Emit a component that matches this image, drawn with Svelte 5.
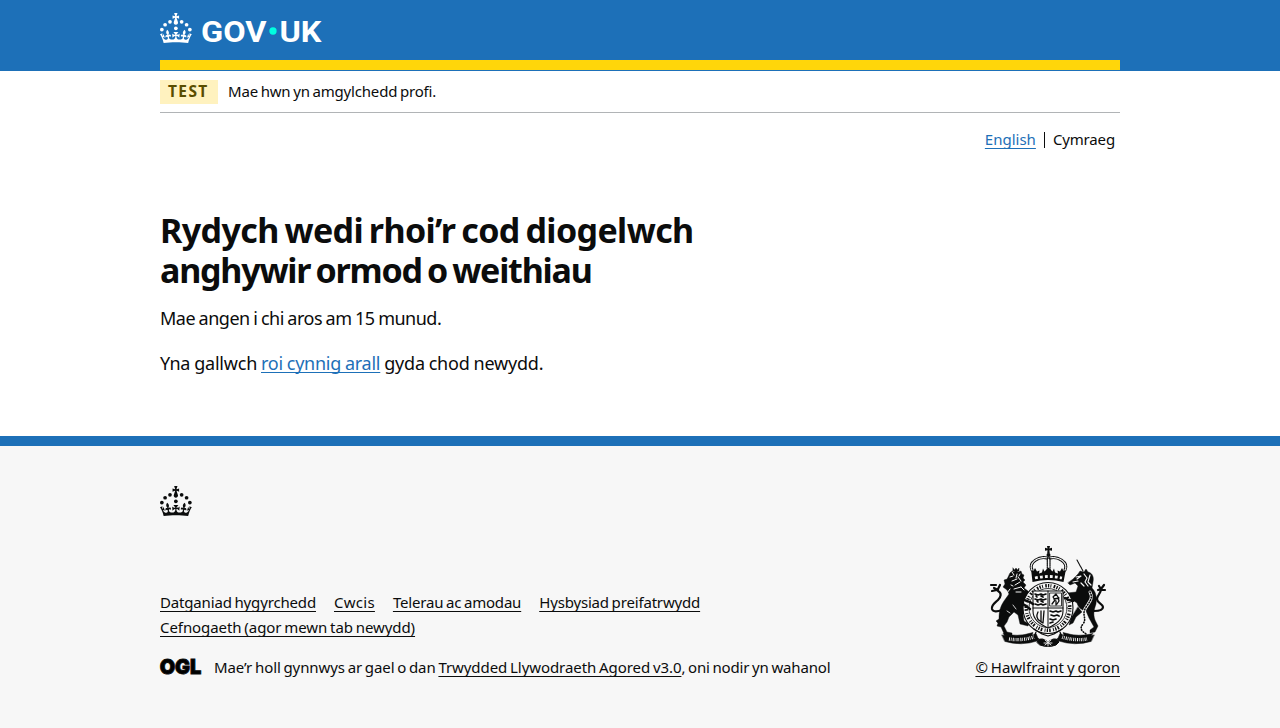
<script>
  const crown = 'M33.1,9.8c.2-.1.3-.3.5-.5l4.6,2.4v-6.8l-4.6,1.5c-.1-.2-.3-.3-.5-.5l1.9-5.9h-6.7l1.9,5.9c-.2.1-.3.3-.5.5l-4.6-1.5v6.8l4.6-2.4c.1.2.3.3.5.5l-2.6,8c-.9,2.8,1.2,5.7,4.1,5.7h0c3,0,5.1-2.9,4.1-5.7l-2.6-8ZM37,37.9s-3.4,3.8-4.1,6.1c2.2,0,4.2-.5,6.4-2.8l-.7,8.5c-2-2.8-4.4-4.1-5.7-3.8.1,3.1.5,6.7,5.8,7.2,3.7.3,6.7-1.5,7-3.8.4-2.6-2-4.3-3.7-1.6-1.4-4.5,2.4-6.1,4.9-3.2-1.9-4.5-1.8-7.7,2.4-10.9,3,4,2.6,7.3-1.2,11.1,2.4-1.3,6.2,0,4,4.6-1.2-2.8-3.7-2.2-4.2.2-.3,1.7.7,3.7,3,4.2,1.9.3,4.7-.9,7-5.9-1.3,0-2.4.7-3.9,1.7l2.4-8c.6,2.3,1.4,3.7,2.2,4.5.6-1.6.5-2.8,0-5.3l5,1.8c-2.6,3.6-5.2,8.7-7.3,17.5-7.4-1.1-15.7-1.7-24.5-1.7h0c-8.8,0-17.1.6-24.5,1.7-2.1-8.9-4.7-13.9-7.3-17.5l5-1.8c-.5,2.5-.6,3.7,0,5.3.8-.8,1.6-2.3,2.2-4.5l2.4,8c-1.5-1-2.6-1.7-3.9-1.7,2.3,5,5.2,6.2,7,5.9,2.3-.4,3.3-2.4,3-4.2-.5-2.4-3-3.1-4.2-.2-2.2-4.6,1.6-6,4-4.6-3.7-3.7-4.2-7.1-1.2-11.1,4.2,3.2,4.3,6.4,2.4,10.9,2.5-2.8,6.3-1.3,4.9,3.2-1.8-2.7-4.1-1-3.7,1.6.3,2.3,3.3,4.1,7,3.8,5.4-.5,5.7-4.2,5.8-7.2-1.3-.2-3.7,1-5.7,3.8l-.7-8.5c2.2,2.3,4.2,2.7,6.4,2.8-.7-2.3-4.1-6.1-4.1-6.1h10.6,0Z';
  const jewels = [[20, 17.6], [10.2, 23.5], [3.7, 33.2], [31.7, 30.6], [43.3, 17.6], [53.2, 23.5], [59.7, 33.2]];
</script>

{#snippet crownMark()}
  {#each jewels as [x, y]}<circle cx={x} cy={y} r="3.7" />{/each}
  <path d={crown} />
{/snippet}

<header>
  <div class="wrap head">
    <svg class="logo" viewBox="0 0 324 60" width="162" height="30" fill="#fff">
      {@render crownMark()}
      <text x="82" y="57.500" font-size="60" textLength="131" lengthAdjust="spacingAndGlyphs">GOV</text>
      <circle cx="226" cy="36" r="7.3" fill="#00ffe0" />
      <text x="239" y="57.500" font-size="60" textLength="84" lengthAdjust="spacingAndGlyphs">UK</text>
    </svg>
    <div class="bar"></div>
  </div>
</header>

<div class="wrap">
  <div class="phase"><strong>TEST</strong><span>Mae hwn yn amgylchedd profi.</span></div>
  <nav><a href="#en">English</a><span class="cy"><span>Cymraeg</span></span></nav>
  <main>
    <h1><span class="one">Rydych wedi rhoi’r cod diogelwch</span> <span class="two">anghywir ormod o weithiau</span></h1>
    <p class="wait">Mae angen i chi aros am 15 munud.</p>
    <p>Yna gallwch <a href="#try">roi cynnig arall</a> gyda chod newydd.</p>
  </main>
</div>

<footer>
  <div class="wrap">
    <svg class="crown" viewBox="0 0 64 60" width="32" height="30" fill="#0b0c0c">{@render crownMark()}</svg>
    <div class="meta">
      <div>
        <ul>
          <li><a class="l1" href="#accessibility">Datganiad hygyrchedd</a></li>
          <li><a class="l2" href="#cookies">Cwcis</a></li>
          <li><a class="l3" href="#terms">Telerau ac amodau</a></li>
          <li><a class="l4" href="#privacy">Hysbysiad preifatrwydd</a></li>
          <li><a class="l5" href="#support">Cefnogaeth (agor mewn tab newydd)</a></li>
        </ul>
        <div class="licence">
          <svg class="ogl" viewBox="0 0 41 17" width="41" height="17">
            <text x="-.3" y="16" textLength="41.5" lengthAdjust="spacingAndGlyphs">OGL</text>
          </svg>
          <span>Mae’r holl gynnwys ar gael o dan <a href="#ogl">Trwydded Llywodraeth Agored v3.0</a><span class="end">, oni nodir yn wahanol</span></span>
        </div>
      </div>
      <div class="copy">
        <svg class="crest" viewBox="0 0 125 102" width="125" height="102" fill="#0b0c0c" stroke="#0b0c0c" stroke-linecap="round" stroke-linejoin="round">
          <!-- lion -->
          <g stroke-width=".4">
            <path d="M25 27l2-2 2 1 2-3 2 3 3-1 1 3 2 1-1 3 2 2-2 2 3 3-2 3 4 3 3 6 7 2-1 3-5-1 4 5-4 1-6-6-2 4c3 3 3 7-1 9l1 7 5 3-1 2-8-2-2-9-4-3-5 5-2 5-3 4 3 6 5 1v3h-7l-4-9-4-1 1-3-2-2 3-2c0-7 1-12 5-18l5-7-2-4-4-3 2-3-1-4 3-1Z" />
            <path d="M28 22l1.500 2 1.500-2 1.500 2 1.500-2v3h-6Z" />
          </g>
          <path d="M17 64c-5 2-9 2-10-1-1-4 3-6 6-9s4-7 0-9M9 42l4 2M6 39l5 0M7 45l5-1M15 39l-2 4" fill="none" stroke-width="2.200" />
          <path d="M26 65l-9 6-3 5" fill="none" stroke-width="3" />
          <path d="M25 31l3-1M32 28l-1 4M27 35l5-2M30 39l5-3M33 31l3 4M29 43l7-2M27 26l2 3M36 41l3 3M26 39l2 1M35 28l-1 2M31 46l5 0M25 43l-3 4" stroke="#f7f7f7" stroke-width="1" fill="none" />
          <path d="M28 59l3 4M22 65l3 2" stroke="#f7f7f7" stroke-width=".8" />
          <!-- unicorn -->
          <path d="M92 14l6 11" fill="none" stroke-width="1.100" stroke-dasharray="2 .5" />
          <g stroke-width=".4">
            <path d="M88 33l5-5 2-3 4 1 2-3 2 3c5 1 6 6 5 10l-1 6c4 4 5 9 4 16-2 6-3 10-1 16l3 6-3 6-5 1v-3l4-3-5-9-3-7c-5-1-8-4-9-8l-9-6-7-2-1-3 7 1 9-1 2-6-3-3-5 2-2-2Z" />
            <path d="M93 61l4 5-6 5-3 6-4 2 2-7Z" />
          </g>
          <path d="M109 65c5 0 9-1 9-4s-6-4-6-8 4-5 4-10M114 40l2 3M119 39l-3 4M113 44l3-1M120 44l-3 0" fill="none" stroke-width="2.200" />
          <path d="M91 31l5-1-4 3M99 28l3 4-2 4 3 4M105 29l-2 7 3 3M96 37l3 3M93 35l-5 1" stroke="#f7f7f7" stroke-width="1.200" fill="none" />
          <path d="M105 46c4 7-2 11-5 17s2 10-2 15-1 7 3 10" stroke="#f7f7f7" stroke-width="3" fill="none" />
          <path d="M105 46c4 7-2 11-5 17s2 10-2 15-1 7 3 10" stroke-width="1.600" stroke-dasharray=".8 1.900" fill="none" />
          <!-- royal crown -->
          <g stroke="none">
            <path d="M62 0h3l-.6 2.4 2.6-.6v3l-2.6-.6.4 3.200h-2.600l.3-3.200-2.500.6v-3l2.500.6Z" />
            <circle cx="63.500" cy="9" r="2" />
            <path d="M46 23l2.500 2 1.500-3 2 3.500 2.500-1-.5 3 3-1 1-4 1.500 3 4-4 4 4 1.500-3 1 4 3 1-.5-3 2.500 1 2-3.500 1.500 3 2.500-2-2.500 13q-15.500-4-31 0Z" />
          </g>
          <path d="M47 24c-4-8 8-14 15-12M80 24c4-8-8-14-15-12" fill="none" stroke-width="3" />
          <path d="M47 24c-4-8 8-14 15-12M80 24c4-8-8-14-15-12" fill="none" stroke="#f7f7f7" stroke-width="1.200" stroke-dasharray="1.200 .8" />
          <path d="M62.300 12v12M65 12v12" fill="none" stroke-width="1.200" stroke-dasharray="1.500 .7" />
          <path d="M50 32q13.500-3 27 0" fill="none" stroke="#f7f7f7" stroke-width="2.800" stroke-linecap="butt" stroke-dasharray="2.800 2.200" />
          <!-- garter -->
          <ellipse cx="63" cy="62" rx="25" ry="25.500" fill="#f7f7f7" stroke-width="1.100" />
          <ellipse cx="63" cy="62" rx="21.800" ry="22.300" fill="none" stroke-width="3.400" stroke-linecap="butt" stroke-dasharray="1.300 1.300 .9 2.300 1.600 1.200" />
          <ellipse cx="63" cy="62" rx="19" ry="19.500" fill="#f7f7f7" stroke-width=".8" />
          <!-- quartered shield -->
          <path d="M48 45h30v20c0 9-7 13-15 17c-8-4-15-8-15-17Z" fill="#f7f7f7" stroke-width="1.100" />
          <path d="M63 45v36M48 62h30" fill="none" stroke-width="1" />
          <g fill="none" stroke-width="1.700">
            <path d="M50 48l3 1 3-1 2 1 3-1M51 50l1 1M56 50l2 1M50 53l3 1 3-1 2 1 3-1M52 55l1 1M56 55l2 1M50 58l3 1 3-1 2 1 3-1" />
            <path d="M65 65l3 1 3-1 2 1 3-1M66 69l3 1 3-1 2 1M65 73l3 1 3-1M65 77l3-1" />
            <path d="M67 58l3-4-2-3 3-3 2 3 1 4-2 3M69 53l5-1M71 55v4" stroke-width="1.300" />
            <path d="M53 66q-3 6 2 9l3 2M56 65v11M59 65l-1 12" stroke-width="1.300" />
          </g>
          <rect x="65" y="47" width="11.500" height="13" fill="none" stroke-width=".8" />
          <path d="M37 53l8 3 3 2M38 58l7 5M88 55l-4-1-4-2" fill="none" stroke-width="2.400" />
          <!-- motto scroll -->
          <path d="M17 89l3 .5-2-2q14 4 30-1l-1 3 4-2 3 7q-18 6-34 1Z" stroke-width=".5" />
          <path d="M109 89l-3 .5 2-2q-14 4-30-1l1 3-4-2-3 7q18 6 34 1Z" stroke-width=".5" />
          <path d="M24 93q12 2 25-2M77 91q13 4 25 2" fill="none" stroke="#f7f7f7" stroke-width="3.400" stroke-linecap="butt" stroke-dasharray="1 .9 .7 1.200" />
          <path d="M49 83l8 5 6 2 6-2 8-5M51 86l-2 5 7 3M75 86l2 5-7 3" fill="none" stroke-width="1.200" />
          <path d="M52 96q3-5 8-2l3 2 3-2q5-3 8 2l-3 3q-8 3-16 0Z" stroke-width="1" />
          <path d="M59 97h8M63 93v7M60 94l6 5M66 94l-6 5" fill="none" stroke="#f7f7f7" stroke-width=".9" />
        </svg>
        <a href="#copyright">© Hawlfraint y goron</a>
      </div>
    </div>
  </div>
</footer>

<style>
  :global(body) { margin: 0; background: #f7f7f7; }
  :global(#app) { background: #fff; font-family: "Noto Sans", sans-serif; color: #0b0c0c; }
  .wrap { width: 960px; margin: 0 auto; }
  header { background: #1d70b8; height: 71px; }
  .head { padding-top: 13px; }
  .logo { display: block; overflow: visible; font-family: Roboto, sans-serif; font-weight: 700; }
  .bar { height: 10px; margin-top: 17px; background: #ffd60a; }
  .phase { display: flex; align-items: center; gap: 10px; height: 41px; border-bottom: 1px solid #b1b4b6; font-size: 15px; letter-spacing: -.18px; word-spacing: -1px; }
  .phase strong { background: #fff2bf; color: #594d00; width: 58px; height: 24px; line-height: 22px; box-sizing: border-box; padding-left: 8px; font-size: 15.500px; letter-spacing: 1.400px; }
  .phase span { line-height: 20px; margin-bottom: 2px; }
  nav { display: flex; justify-content: flex-end; padding: 19px 5px 0 0; font-size: 15px; line-height: 14px; height: 16px; }
  nav .cy { border-left: 1px solid #0b0c0c; margin-left: 8px; padding-left: 8px; letter-spacing: -.15px; }
  a { color: #1d70b8; text-decoration-thickness: 1px; text-underline-offset: 3px; text-decoration-skip-ink: none; }
  main { padding-top: 62px; height: 226px; }
  h1 { width: 600px; font-size: 34px; line-height: 40px; margin: 0 0 16px; word-spacing: -2.5px; }
  h1 span { display: block; white-space: nowrap; }
  .one { letter-spacing: -.6px; }
  .two { letter-spacing: -1.2px; }
  main p { font-size: 18px; line-height: 25px; margin: 0 0 20px; letter-spacing: -.2px; word-spacing: -.6px; }
  main .wait { letter-spacing: -.51px; }
  main a { letter-spacing: -.24px; text-underline-offset: 2px; }
  footer { box-sizing: border-box; height: 292px; background: #f7f7f7; border-top: 10px solid #1d70b8; padding-top: 40px; font-size: 15px; word-spacing: -1px; }
  footer a { color: #0b0c0c; }
  .crown { display: block; }
  .meta { display: flex; justify-content: space-between; align-items: flex-end; padding-top: 30px; }
  ul { display: flex; flex-wrap: wrap; width: 620px; column-gap: 18px; list-style: none; margin: 0 0 15px; padding: 0; line-height: 25px; }
  .licence { display: flex; align-items: center; gap: 13px; line-height: 25px; letter-spacing: -.1px; }
  .licence a { letter-spacing: -.07px; }
  .end, .l1 { letter-spacing: -.16px; }
  .l2 { letter-spacing: .28px; }
  .l3 { letter-spacing: -.19px; }
  .l4 { letter-spacing: -.17px; }
  .l5 { letter-spacing: -.07px; }
  .ogl { overflow: visible; font-family: Inter, sans-serif; font-weight: 900; font-size: 20.500px; stroke: #0b0c0c; stroke-width: .9px; margin-top: -3px; word-spacing: 0; }
  .copy { display: flex; flex-direction: column; align-items: center; line-height: 25px; }
  .crest { display: block; margin-bottom: 7px; }
</style>
